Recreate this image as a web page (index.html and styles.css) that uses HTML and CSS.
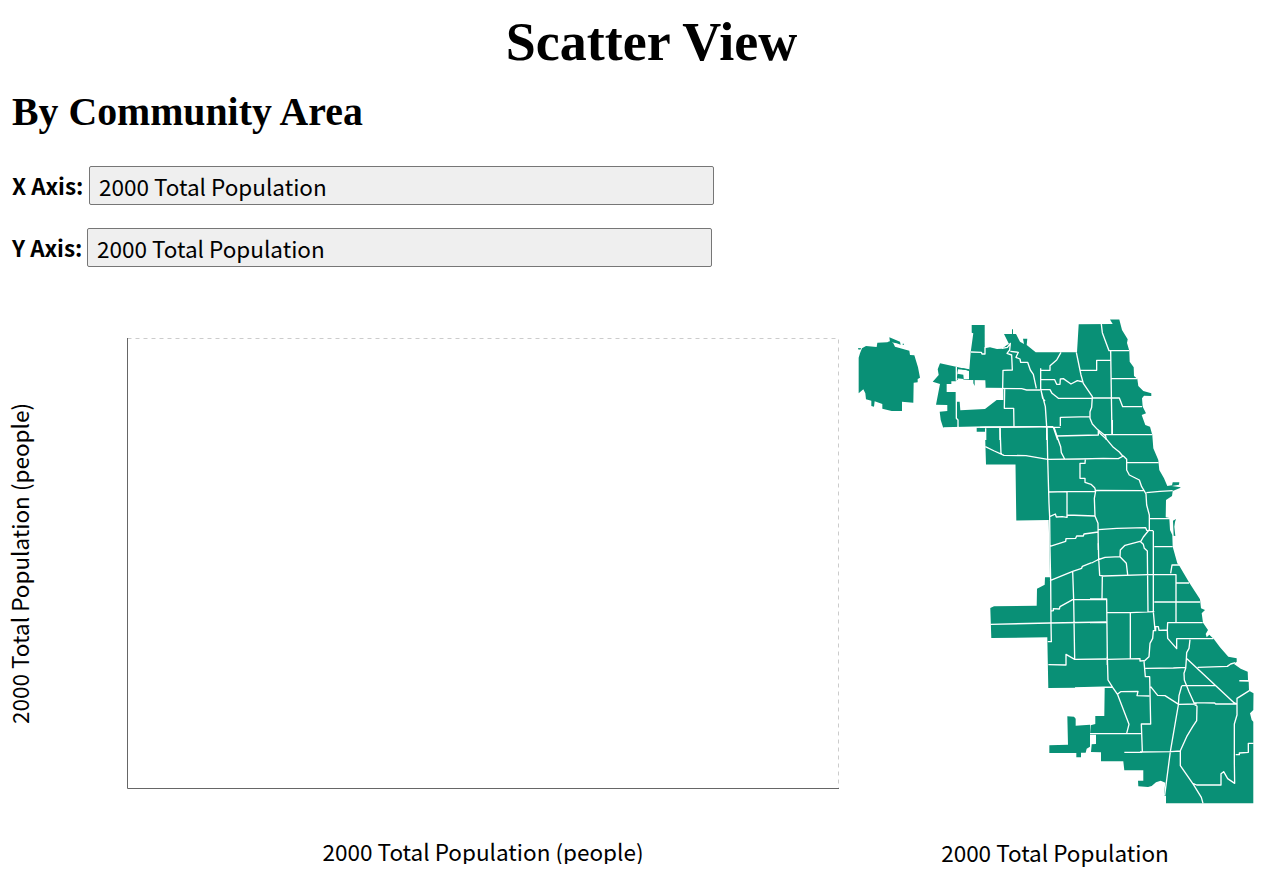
FILE: index.html
```html
<!DOCTYPE html>
<html lang="en">
<head>
<meta charset="utf-8">
<title>Scatter View</title>
<link rel="stylesheet" href="styles.css">
</head>
<body>
<h1 class="title"><span>Scatter View</span></h1>
<h2 class="subtitle">By Community Area</h2>
<div class="field"><label class="label" for="x-axis">X Axis:</label><select class="select" id="x-axis"><option>2000 Total Population</option></select></div>
<div class="field field-y"><label class="label" for="y-axis">Y Axis:</label><select class="select" id="y-axis"><option>2000 Total Population</option></select></div>
<main class="views">
<svg class="chart" viewBox="0 304 850 560">
  <path class="frame" d="M127.5 338.5H838.5V788.5H127.5"/>
  <path class="axis" d="M127.5 338V788.5H839"/>
  <text x="322.5" y="861" textLength="321">2000 Total Population (people)</text>
  <text transform="translate(29 724) rotate(-90)" textLength="321">2000 Total Population (people)</text>
</svg>
<section class="map-panel">
<svg class="map" viewBox="850 304 410 506">
  <g class="land">
    <path d="M971.7 325H984.7V348.3L990 347.3 997 349 1002 348.7 1007 345 1009 344 1004 334H1016L1020 341.7 1024 344 1023 338.7H1027.3L1026.7 345 1035.7 352.3H1077L1078.7 324.3 1112.7 324 1110 319.5H1119.3L1122 330 1127.7 339.3 1127 343 1129.3 350.7 1129.7 361.7 1133.7 367.3 1134 376 1137.3 378.7 1138.3 386 1143.3 391 1151.3 393.3V396L1144 395.7 1142 398.3 1142.7 406.7 1146 413.3 1141.7 415 1145.3 425 1150 426.7 1152.3 435 1153.3 448.3 1158.3 460 1159.3 470 1164 478.3 1167.3 486 1172 485.3 1172.7 482.3H1179.3L1179 484.7 1171.7 486 1180.7 487.3 1180 488 1172.7 491 1172 496 1166 500 1165.7 517.3 1169.3 518 1170 530 1172.3 535 1172.7 546.7 1177.3 563.3 1179.3 565.7 1189.3 582.7 1200 599.3 1201 608.3 1205 610 1201.7 613.3 1203 622.7 1208 630 1205.7 634 1206.7 637.3 1209.3 634.7 1214 639.3 1220 647.3 1228.3 656.7 1236.7 658.3V661.7L1234 664 1240.7 668.7 1247.7 671.7 1248 680H1239.3V681.5L1248.7 681.7 1249 690.7 1253.5 693.3 1253.3 710 1250 713.3 1251.7 720 1253.3 721.7V803.3H1166V796L1164 795.3 1165.3 782.7 1160.7 780.7 1156 782.3 1151.7 786 1148 787 1138.3 786.3 1138 780.7H1143.3V770.3H1124.3L1123.3 761.3H1101V752.3L1091 752 1091.7 744.3 1096 744V734.7H1090L1090.7 725.3 1095.3 724V716H1104.3L1104.7 687.5 1048.3 688 1047.3 637.3 991.3 638 990.3 608 994 606.3 1036.7 605.7 1037 588.7 1044.7 584.7 1045 577.3H1050L1048.7 520 1016.3 520.5 1015.5 464.5H986L985 431.7H976.7V428H943.3L940.7 420 939.7 411.7 947.3 411V405L936 404.7 940 384 932.7 381.7 938.7 375 937.7 369.3 940 363.3 956 366.7 969.3 369.7 970.7 352.3 973.3 333.3 971.7 332.7Z"/>
    <path transform="translate(850 310) scale(.33333)" d="M36 115 48 108 80 111 82 98 112 97 118 94 130 100 135 110 178 122 180 135 193 136 204 172 210 203 203 207V217L191 218 190 278 156 275V303H125L97 296V282L74 274 72 290 64 288V272L48 268 46 250 40 238 26 250V143L30 130ZM118 82 150 95 152 104 140 100 120 96ZM24 115 33 114 31 119 24 118ZM158 101H162V104H158ZM486 58H489V74H486Z"/>
    <path transform="translate(1040 650) scale(.33333)" d="M82 199 102 200 107 206V227L150 224V290L140 296 137 308H123V322H109V309H28V286L84 284Z"/>
    <path transform="translate(980 420) scale(.33333)" d="M579 302 588 297 585 306 583 320 586 348 581 347Z"/>
  </g>
  <path class="hole" transform="translate(850 310) scale(.33333)" d="M290 222H304V214H318L324 208 320 202 324 178 354 181 343 188 340 209 356 210 406 211 407 235 460 237V270H440L405 297 331 301 329 275H320V246H290Z"/>
  <path class="hole" transform="translate(850 310) scale(.33333)" d="M340 182H357V208H340ZM366 211H374V228H366Z"/>
  <g class="land"><path transform="translate(850 310) scale(.33333)" d="M322 191 340 194 341 207 320 205ZM337 174 358 178 357 182 336 178ZM370 210H374V228L370 220Z"/></g>
  <g class="borders">
    <g transform="translate(850 310) scale(.33333)">
      <path d="M363 126 394 127 396 132H405V112M456 115 472 112 481 100 479 120 471 130 485 135 487 180 459 181 458 235M481 124 505 127 498 142 510 147 512 157H533L541 180 550 193 559 235M319 171V212M319 245V325L324 330V354M407 235 515 236 530 240H570M464 238 463 295H491L492 350M280 354 406 351 570 350M407 355V390M450 355V390M572 175V235L578 265 585 273M574 245 586 290 590 350V390"/>
    </g>
    <g transform="translate(1040 310) scale(.33333)">
      <path d="M184 42 187 68 207 122H268M109 127 123 195 130 220 157 260 155 292 150 305V325L157 342 172 358 197 378 199 390M212 122 216 375M122 181H170V151H212M214 206H292M157 264H238L248 290H306M63 127 50 150 30 167V181H0M0 209H44L50 223H60L61 207 70 206 93 222 112 212 130 216M0 239H30L36 250 55 265H157M61 348V322L150 320M0 350 40 352H61M40 352 53 390M50 378 175 375V361M190 374H336"/>
    </g>
    <g transform="translate(980 420) scale(.33333)">
      <path d="M0 22 220 20M201 20 203 115 207 250 209 290 210 390M60 22 63 102M16 80 43 93 72 106 138 107 203 118 298 117 370 115 415 116 430 108 440 118 440 150 448 165 478 180 485 200 493 213 498 222 500 255 508 285V330M222 22 233 55 242 80 244 98 254 117M355 35 378 56 400 82 418 96 428 108M397 0V43M440 128H536M206 216 261 215 343 215 350 211 493 212M316 118 315 130H300V175H315V187L333 193 344 203 347 213 343 235 345 288 354 310 355 390M261 215V292M209 290 226 282 229 291 247 290 261 292 262 285 345 288M355 329 410 325 497 323 500 331 520 332M499 218 540 214 578 212M508 296H570M210 379 257 364 258 356 287 355 290 348H310L312 342 355 336"/>
    </g>
    <g transform="translate(980 530) scale(.33333)">
      <path d="M210 60 212 150 213 280 214 335H203M210 152 278 124 305 115 307 109 335 98M213 243 220 242V236L238 237 240 230 278 209H378M278 124 281 209 284 388M31 283 210 279 380 276M205 404 258 405V373L284 388 380 387"/>
    </g>
    <g transform="translate(1090 500) scale(.33333)">
      <path d="M25 130 26 175 29 226 40 228 175 224H258V368M5 189 22 180 45 172 90 170 91 150 105 136 150 124 160 133 163 145 172 153 174 335M90 170 109 190 113 224M177 90 160 111 152 125M190 93V336L195 390M37 228 36 298M0 297H50L52 475V495M0 368H50M50 338 122 338 193 335M121 338V475M50 478 150 476 150 483 162 482M162 484 177 470 180 430 188 415 190 392H197V380H205L207 391 232 390 233 415 260 446V415M232 390 233 368H338M260 416H370M193 306H330M258 249H297M242 220 246 195H270M193 140H248"/>
    </g>
    <g transform="translate(1040 650) scale(.33333)">
      <path d="M202 20 204 90 218 112 233 134 267 223 260 250M105 114 218 111M233 132 242 125 294 124 291 137 329 138M150 251H304M253 307H306"/>
    </g>
    <g transform="translate(1140 620) scale(.33333)">
      <path d="M12 124 16 170H29L32 312H4L7 395M16 145 100 144 137 142M150 59 147 85 140 98 139 118 137 145 132 160 133 180 147 215 165 255 171 258 170 302 158 320 140 350 121 392 121 437 160 493 184 532 189 550M139 115 282 248 291 252V235L328 212M173 142 262 139 272 132 286 128M125 197H226M32 200 53 226 75 227 116 253 170 252M163 248 224 249 227 252H291V285L283 312V430L284 490 263 476 251 455 243 461V495H170L158 490M125 198 117 227 115 255 91 395 74 526M0 396 93 395 121 393M287 404H298V399L325 397V370H341"/>
    </g>
  </g>
</svg>
<p class="map-caption">2000 Total Population</p>
</section>
</main>
</body>
</html>
```
FILE: styles.css
```css
* { box-sizing: border-box; }
body {
  margin: 0;
  width: 1279px;
  height: 883px;
  overflow: hidden;
  background: #fff;
  color: #000;
  font-family: "Noto Sans CJK JP", "Noto Sans CJK SC", sans-serif;
  font-size: 22.5px;
}
.title, .subtitle {
  margin: 0;
  font-family: "Liberation Serif", serif;
  font-weight: bold;
  white-space: nowrap;
}
.title {
  height: 84px;
  padding-left: 24px;
  font-size: 54px;
  line-height: 84px;
  text-align: center;
}
.subtitle {
  height: 82px;
  padding-left: 12px;
  font-size: 39.8px;
  line-height: 56px;
}
.field {
  display: flex;
  align-items: center;
  gap: 6px;
  height: 39px;
  margin-bottom: 23px;
  padding-left: 12px;
}
.label {
  width: 71px;
  font-weight: bold;
  line-height: 41px;
  white-space: nowrap;
}
.field-y .label { width: 69px; }
.select {
  appearance: none;
  width: 625px;
  height: 39px;
  margin: 0;
  padding: 0 9px;
  border: 1px solid #767676;
  border-radius: 2px;
  background: #efefef;
  color: #000;
  font: inherit;
}
.views {
  display: flex;
  margin-top: 37px;
}
.chart { display: block; width: 850px; height: 560px; }
.chart text { font-size: 22.5px; }
.frame { fill: none; stroke: #ccc; stroke-dasharray: 4 4; }
.axis { fill: none; stroke: #666; }
.map-panel { width: 410px; }
.map { display: block; width: 410px; height: 506px; }
.land { fill: #099076; }
.hole { fill: #fff; }
.borders { fill: none; stroke: #fff; stroke-width: 4; stroke-linejoin: round; }
.map-caption {
  margin: 23px 0 0;
  line-height: 39px;
  text-align: center;
}
```
